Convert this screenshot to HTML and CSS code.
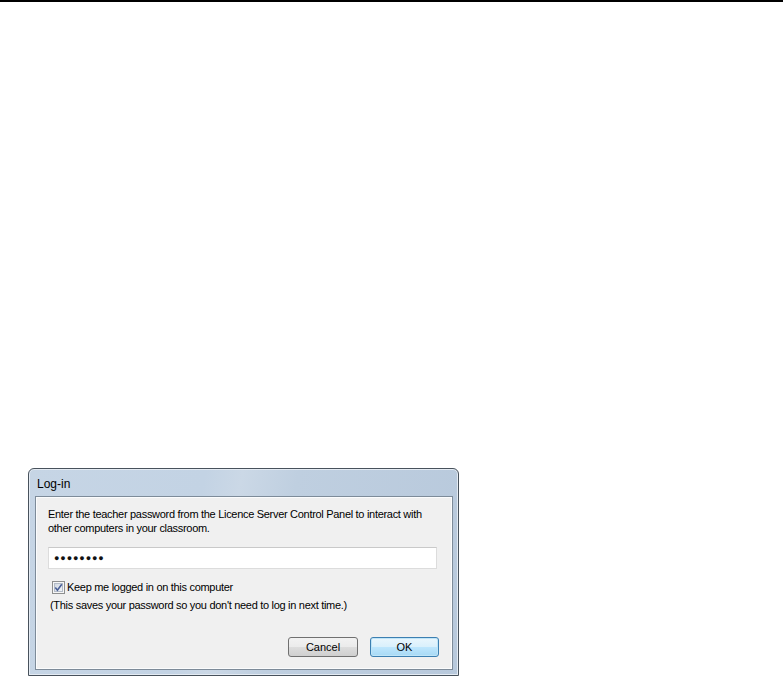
FILE: index.html
```html
<!DOCTYPE html>
<html>
<head>
<meta charset="utf-8">
<link rel="stylesheet" href="styles.css">
</head>
<body>
<div class="topline"></div>
<div class="stage">
  <div class="dialog">
    <div class="titlebar">Log-in</div>
    <div class="panel">
      <p class="intro">Enter the teacher password from the Licence Server Control Panel to interact with other computers in your classroom.</p>
      <div class="field"><span class="dots">●●●●●●●●</span></div>
      <label class="check">
        <svg class="box" width="13" height="13" viewBox="0 0 13 13">
          <defs>
            <linearGradient id="cb" x1="0" y1="0" x2="1" y2="1">
              <stop offset="0" stop-color="#cfd6e0"/>
              <stop offset="1" stop-color="#f4f6f9"/>
            </linearGradient>
          </defs>
          <rect x="0.5" y="0.5" width="12" height="12" fill="#f6f6f6" stroke="#8e8f8f"/>
          <rect x="2.5" y="2.5" width="8" height="8" fill="url(#cb)" stroke="#b4bcc8"/>
          <path d="M3.3 6.6 L5.4 9.2 L9.8 3.2" fill="none" stroke="#4a5f97" stroke-width="1.6"/>
        </svg>
        <span>Keep me logged in on this computer</span>
      </label>
      <p class="note">(This saves your password so you don't need to log in next time.)</p>
      <div class="buttons">
        <button class="btn">Cancel</button>
        <button class="btn primary">OK</button>
      </div>
    </div>
  </div>
</div>
</body>
</html>
```
FILE: styles.css
```css
html, body {
  margin: 0;
  padding: 0;
  background: #ffffff;
}
body {
  font-family: "Liberation Sans", Arial, sans-serif;
  font-size: 11px;
  letter-spacing: -0.3px;
  color: #000;
}
.topline {
  height: 2px;
  background: #000;
}
.stage {
  padding: 466px 0 0 28px;
}
.dialog {
  box-sizing: border-box;
  width: 431px;
  height: 208px;
  border: 1px solid #48525c;
  border-radius: 6px 6px 0 0;
  background: linear-gradient(100deg, #c6d5e5 0%, #c3d3e4 38%, #cbd8e6 46%, #bfcfe0 58%, #b8c9dc 100%);
  padding: 0 5px 5px 6px;
  box-shadow: inset 0 0 0 1px #e4ebf3;
  display: flex;
  flex-direction: column;
}
.titlebar {
  height: 27px;
  line-height: 30px;
  padding-left: 2px;
  font-size: 12px;
  letter-spacing: 0;
  color: #000;
}
.panel {
  flex: 1;
  background: #f0f0f0;
  border: 1px solid #7d8b99;
  box-shadow: inset 0 0 0 1px #fbfcfd;
  padding: 10px 13px 0 12px;
  display: flex;
  flex-direction: column;
}
.intro {
  margin: 0;
  line-height: 14px;
  width: 392px;
}
.field {
  margin-top: 12px;
  height: 20px;
  width: 382px;
  background: #fff;
  border: 1px solid #dcdcdc;
  border-top-color: #c9c9c9;
  display: flex;
  align-items: center;
  padding-left: 5px;
}
.dots {
  font-size: 9px;
  letter-spacing: 0.9px;
  color: #111;
}
.check {
  margin-top: 11px;
  margin-left: 4px;
  display: flex;
  align-items: center;
  gap: 2px;
  height: 14px;
}
.box {
  display: block;
}
.note {
  margin: 4px 0 0 2px;
  line-height: 14px;
}
.buttons {
  margin-top: 25px;
  display: flex;
  justify-content: flex-end;
  gap: 12px;
}
.btn {
  width: 70px;
  height: 20px;
  font-family: inherit;
  font-size: 11px;
  letter-spacing: 0;
  border: 1px solid #707070;
  border-radius: 3px;
  background: linear-gradient(#f2f2f2 0%, #ebebeb 50%, #dddddd 51%, #cfcfcf 100%);
  padding: 0;
  color: #000;
}
.btn.primary {
  width: 69px;
  border-color: #3c7fb1;
  background: linear-gradient(#eaf6fd 0%, #d9f0fc 50%, #bee6fd 51%, #a7d9f5 100%);
  box-shadow: inset 0 0 0 1px #bfe5f8;
}
```
